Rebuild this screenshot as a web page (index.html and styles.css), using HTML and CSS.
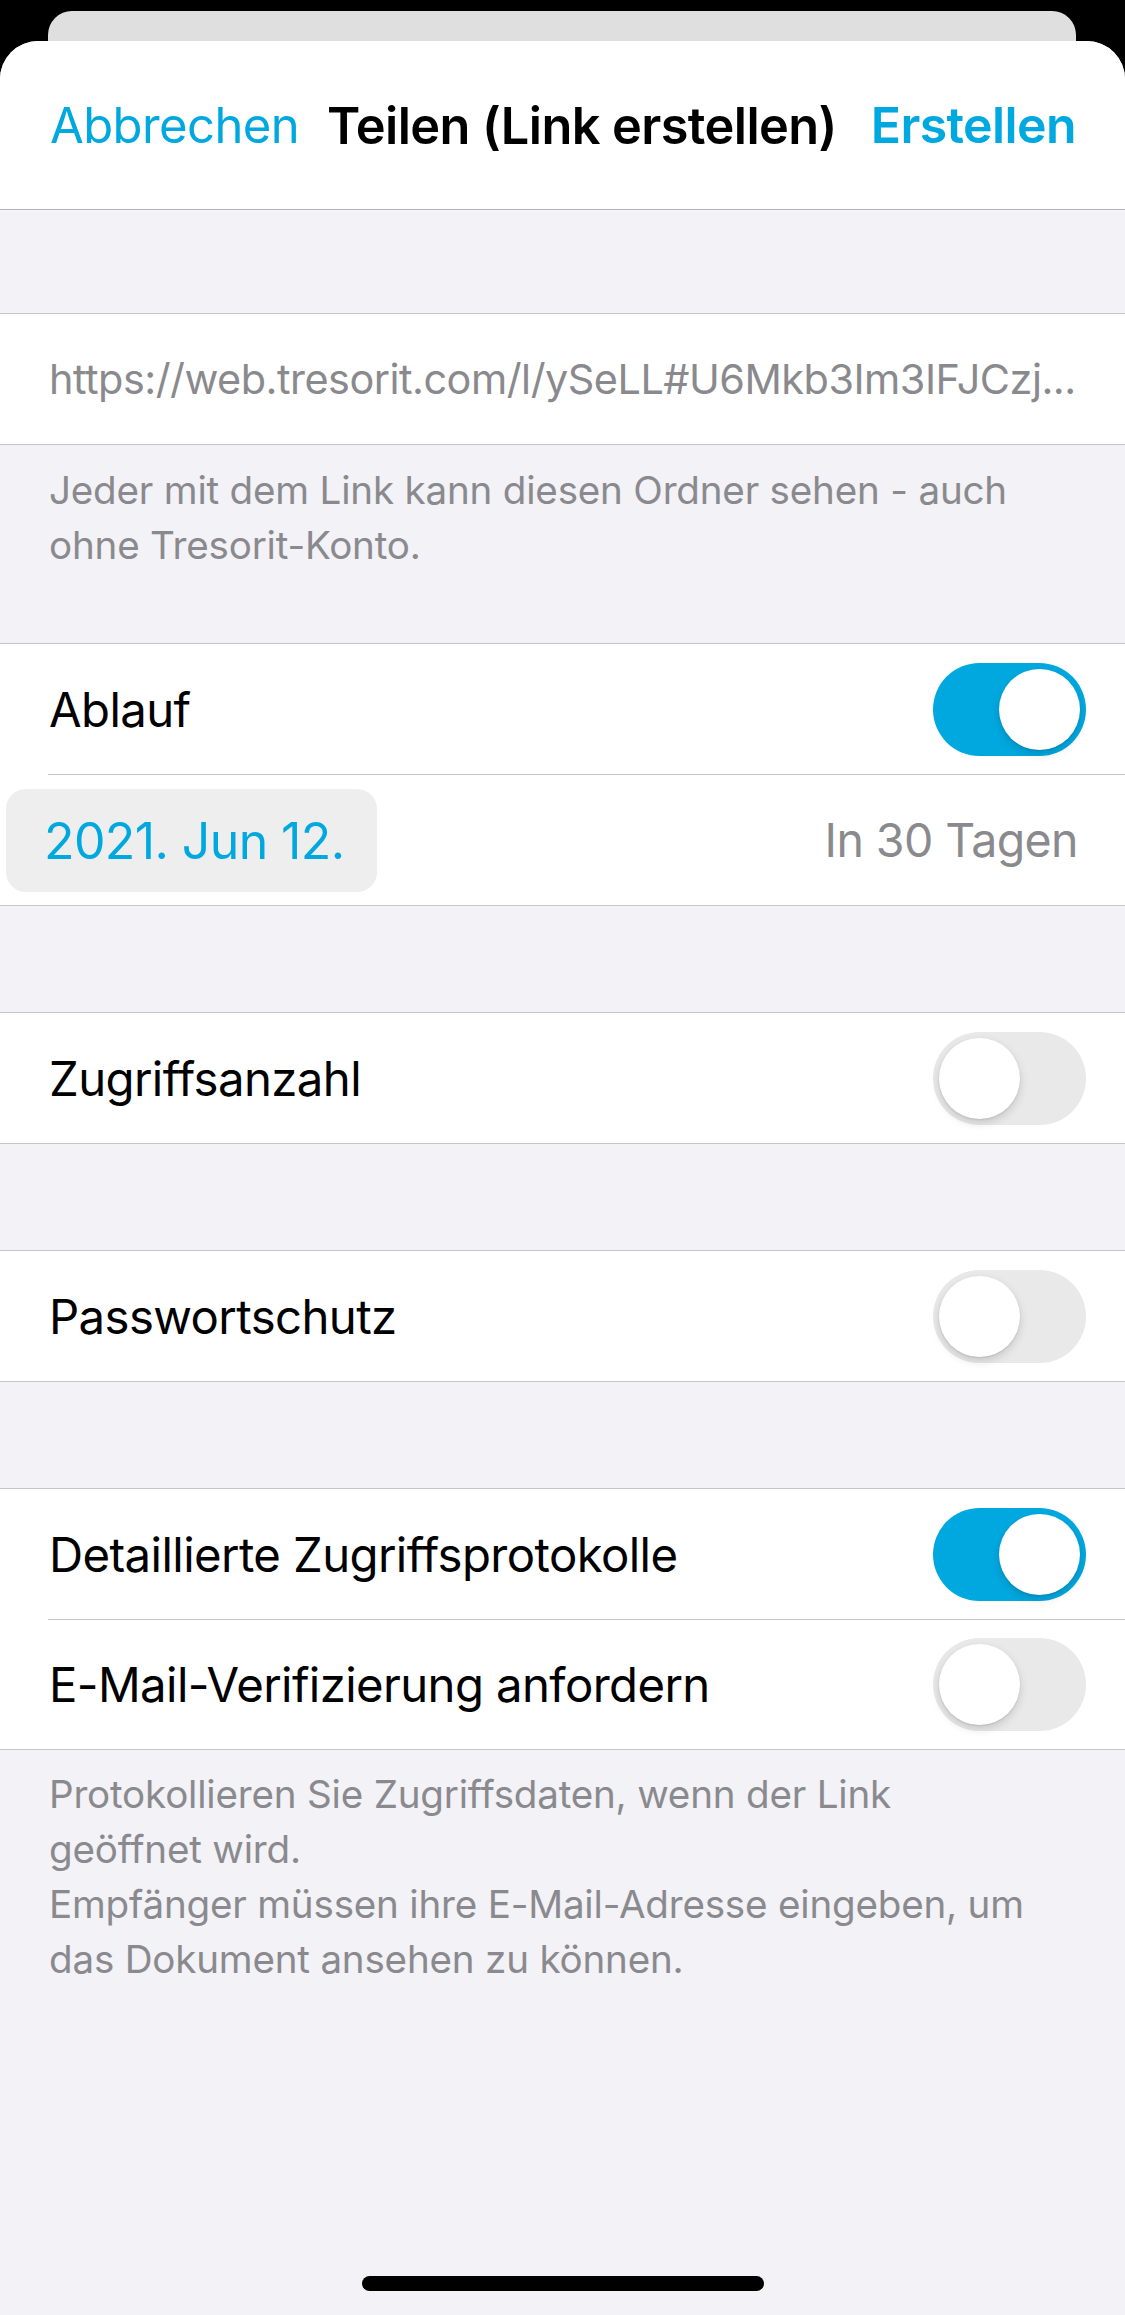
FILE: index.html
```html
<!DOCTYPE html>
<html lang="de">
<head>
<meta charset="utf-8">
<title>Teilen (Link erstellen)</title>
<link rel="stylesheet" href="styles.css">
</head>
<body>
<div class="screen">
  <div class="backdrop"><div class="back-card"></div></div>
  <div class="sheet">
    <header class="nav">
      <span class="nav-btn">Abbrechen</span>
      <span class="nav-title">Teilen (Link erstellen)</span>
      <span class="nav-btn strong">Erstellen</span>
    </header>

    <div class="gap first"></div>
    <section class="group">
      <div class="row">
        <span class="url">https://web.tresorit.com/l/ySeLL#U6Mkb3Im3IFJCzj...</span>
      </div>
    </section>
    <p class="footnote top-note">Jeder mit dem Link kann diesen Ordner sehen - auch ohne Tresorit-Konto.</p>

    <section class="group">
      <div class="row">
        <span class="label">Ablauf</span>
        <span class="switch on"><span class="knob"></span></span>
      </div>
      <div class="row date-row">
        <span class="date-pill">2021. Jun 12.</span>
        <span class="detail">In 30 Tagen</span>
      </div>
    </section>

    <div class="gap"></div>
    <section class="group">
      <div class="row">
        <span class="label">Zugriffsanzahl</span>
        <span class="switch"><span class="knob"></span></span>
      </div>
    </section>

    <div class="gap"></div>
    <section class="group">
      <div class="row">
        <span class="label">Passwortschutz</span>
        <span class="switch"><span class="knob"></span></span>
      </div>
    </section>

    <div class="gap"></div>
    <section class="group">
      <div class="row">
        <span class="label">Detaillierte Zugriffsprotokolle</span>
        <span class="switch on"><span class="knob"></span></span>
      </div>
      <div class="row">
        <span class="label">E-Mail-Verifizierung anfordern</span>
        <span class="switch"><span class="knob"></span></span>
      </div>
    </section>
    <div class="footnote bottom-note">
      <p>Protokollieren Sie Zugriffsdaten, wenn der Link geöffnet wird.</p>
      <p>Empfänger müssen ihre E-Mail-Adresse eingeben, um das Dokument ansehen zu können.</p>
    </div>

    <div class="home-area"><div class="home-indicator"></div></div>
  </div>
</div>
</body>
</html>
```
FILE: styles.css
```css
* { box-sizing: border-box; }
html, body {
  margin: 0;
  padding: 0;
  background: #000;
}
body {
  font-family: Inter, "Noto Sans", "Liberation Sans", sans-serif;
  -webkit-font-smoothing: antialiased;
}
.screen {
  width: 1125px;
  height: 2315px;
  display: flex;
  flex-direction: column;
  overflow: hidden;
  background: #000;
}
.backdrop {
  height: 41px;
  padding: 11px 49px 0 48px;
  flex: none;
}
.back-card {
  height: 30px;
  background: #dfdfdf;
  border-radius: 24px 24px 0 0;
}
.sheet {
  flex: 1;
  display: flex;
  flex-direction: column;
  background: #f2f2f7;
  border-radius: 38px 38px 0 0;
  overflow: hidden;
}
.nav {
  height: 169px;
  flex: none;
  background: #fff;
  border-bottom: 1px solid #b4b4b8;
  display: flex;
  align-items: center;
  justify-content: space-between;
  padding: 0 49px 0 50px;
  font-size: 49px;
  letter-spacing: -0.6px;
}
.nav-btn { color: #00a8e0; }
.nav-btn.strong { font-weight: 600; font-size: 50px; }
.nav-title { font-weight: 600; color: #000; font-size: 50.5px; margin-right: 6px; }

.gap { height: 106px; flex: none; }
.gap.first { height: 103px; }

.group {
  background: #fff;
  border-top: 1px solid #c6c6c8;
  border-bottom: 1px solid #c6c6c8;
  flex: none;
}
.row {
  height: 130px;
  display: flex;
  align-items: center;
  justify-content: space-between;
  padding: 0 39px 0 49px;
  position: relative;
}
.row + .row { border-top: 1px solid #c6c6c8; }
.row + .row { margin-left: 48px; padding-left: 1px; }
.row.date-row {
  margin-left: 0;
  padding: 0 47px 0 6px;
  border-top: none;
  height: 131px;
}
.group .row.date-row::before {
  content: "";
  position: absolute;
  top: 0;
  left: 48px;
  right: 0;
  border-top: 1px solid #c6c6c8;
}
.label {
  font-size: 47.3px;
  letter-spacing: -0.6px;
  color: #000;
}
.url {
  font-size: 41.4px;
  letter-spacing: -0.5px;
  color: #8a8a8e;
  white-space: nowrap;
  overflow: hidden;
}
.detail {
  font-size: 46.5px;
  letter-spacing: -0.6px;
  color: #8a8a8e;
}
.date-pill {
  height: 103px;
  width: 371px;
  margin-top: 2px;
  background: #eeeeef;
  border-radius: 20px;
  color: #00a8e0;
  font-size: 50px;
  letter-spacing: -0.6px;
  display: flex;
  align-items: center;
  padding-left: 38px;
}

.switch {
  width: 153px;
  height: 93px;
  border-radius: 47px;
  background: #e9e9ea;
  position: relative;
  flex: none;
}
.switch .knob {
  position: absolute;
  top: 6px;
  left: 6px;
  width: 81px;
  height: 81px;
  border-radius: 50%;
  background: #fff;
  box-shadow: 0 4px 10px rgba(0,0,0,0.14), 0 1px 2px rgba(0,0,0,0.10);
}
.switch.on { background: #00a8e0; }
.switch.on .knob { left: 66px; }

.footnote {
  margin: 0;
  color: #8a8a8e;
  font-size: 38.6px;
  line-height: 55px;
  letter-spacing: -0.2px;
  padding: 0 80px 0 49px;
  flex: none;
}
.footnote p { margin: 0; }
.top-note {
  height: 198px;
  padding-top: 18px;
}
.bottom-note {
  padding-top: 17px;
}
.home-area {
  flex: 1;
  display: flex;
  align-items: flex-end;
  justify-content: center;
  padding-bottom: 24px;
}
.home-indicator {
  width: 402px;
  height: 15px;
  border-radius: 8px;
  background: #000;
}
```
